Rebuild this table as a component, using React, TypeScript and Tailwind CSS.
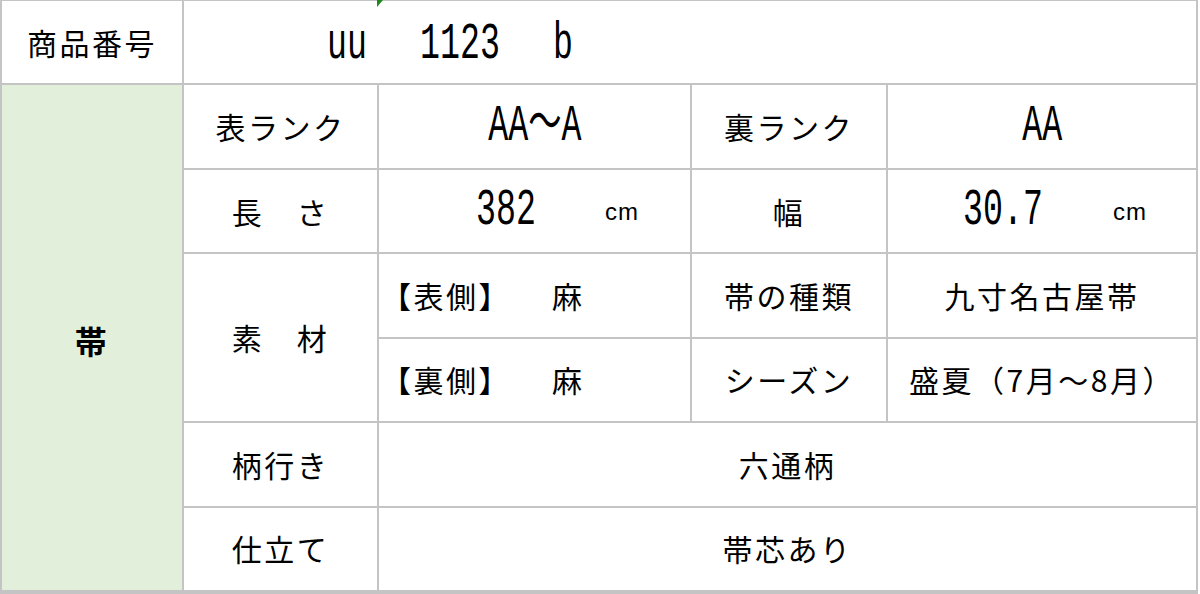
import React from 'react';

const jp = "font-['Noto_Sans_CJK_JP',sans-serif] text-[30px] tracking-[2.5px] text-black";
const num = "font-['Liberation_Mono','Noto_Sans_CJK_JP',monospace] text-[52px] text-black";

function Cell({ children, className = '' }: { children?: React.ReactNode; className?: string }) {
  return <div className={`bg-white flex items-center ${className}`}>{children}</div>;
}

// narrow numeric text (the sheet's half-width gothic), squeezed horizontally
function Narrow({ text, origin = 'origin-left' }: { text: string; origin?: string }) {
  return (
    <span className={`inline-block whitespace-pre scale-x-[0.64] ${origin} leading-none ${num}`}>{text}</span>
  );
}

function Cm() {
  return <span className="font-['Liberation_Sans',sans-serif] text-[24px] tracking-[1px] text-black leading-none pt-[2px]">cm</span>;
}

export default function App() {
  return (
    <div className="w-[1200px] h-[594px] bg-white">
      <div className="w-[1198px] h-[594px] bg-[#c4c4c4] pl-[2px] pr-[2px] pt-[1px] pb-[4px] grid grid-cols-[180px_193px_311px_194px_1fr] grid-rows-7 gap-[2px]">
        {/* header row */}
        <Cell className={`bg-[#e2efda] justify-center ${jp}`}>商品番号</Cell>
        <div className="col-span-4 bg-white relative flex items-center pt-[6px] pl-[143px]">
          <span className="absolute left-[193px] -top-[1px] w-0 h-0 border-t-[7px] border-t-[#1e8a1e] border-r-[6px] border-r-transparent" />
          <span className="w-[93px]"><Narrow text="uu" /></span>
          <span className="w-[133px]"><Narrow text="1123" /></span>
          <span><Narrow text="b" /></span>
        </div>

        {/* obi label */}
        <div className={`row-span-6 bg-[#e2efda] flex items-center justify-center pt-[4px] ${jp} text-[32px] font-bold`}>帯</div>

        {/* rank */}
        <Cell className={`justify-center ${jp}`}>表ランク</Cell>
        <Cell className="justify-center"><Narrow text="AA～A" origin="origin-center" /></Cell>
        <Cell className={`justify-center ${jp}`}>裏ランク</Cell>
        <Cell className="justify-center"><Narrow text="AA" origin="origin-center" /></Cell>

        {/* size */}
        <Cell className={`justify-center ${jp}`}>長　さ</Cell>
        <Cell className="pl-[97px]">
          <span className="w-[129px]"><Narrow text="382" /></span>
          <Cm />
        </Cell>
        <Cell className={`justify-center ${jp}`}>幅</Cell>
        <Cell className="pl-[75px]">
          <span className="w-[150px]"><Narrow text="30.7" /></span>
          <Cm />
        </Cell>

        {/* material */}
        <Cell className={`row-span-2 justify-center ${jp}`}>素　材</Cell>
        <Cell className={`pl-[2px] ${jp}`}>
          <span>【表側】</span>
          <span className="ml-[41px]">麻</span>
        </Cell>
        <Cell className={`justify-center ${jp}`}>帯の種類</Cell>
        <Cell className={`justify-center ${jp}`}>九寸名古屋帯</Cell>

        <Cell className={`pl-[2px] ${jp}`}>
          <span>【裏側】</span>
          <span className="ml-[41px]">麻</span>
        </Cell>
        <Cell className={`justify-center ${jp}`}>シーズン</Cell>
        <Cell className={`justify-center ${jp} tracking-[1px]`}>盛夏（7月～8月）</Cell>

        {/* pattern / tailoring */}
        <Cell className={`justify-center ${jp}`}>柄行き</Cell>
        <Cell className={`col-span-3 justify-center ${jp}`}>六通柄</Cell>

        <Cell className={`justify-center ${jp}`}>仕立て</Cell>
        <Cell className={`col-span-3 justify-center ${jp}`}>帯芯あり</Cell>
      </div>
    </div>
  );
}
